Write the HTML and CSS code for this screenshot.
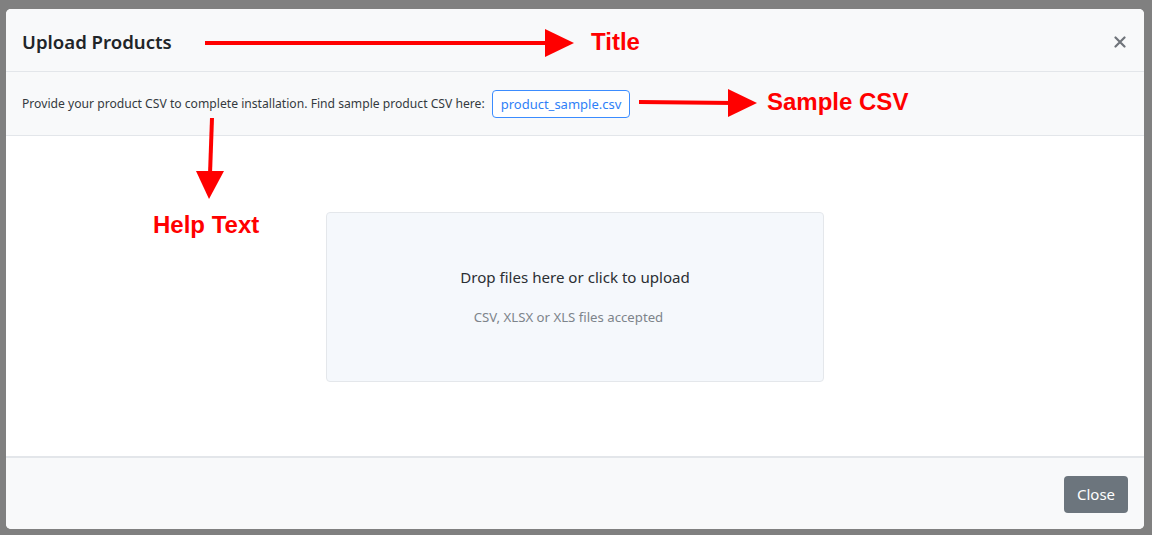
FILE: index.html
```html
<!DOCTYPE html>
<html>
<head>
<meta charset="utf-8">
<link rel="stylesheet" href="styles.css">
</head>
<body>
<div class="backdrop">
  <div class="modal">
    <div class="modal-header">
      <h2 class="modal-title">Upload Products</h2>
      <button class="btn-x" aria-label="Close">
        <svg width="12" height="12" viewBox="0 0 12 12"><path d="M1.5 1.5L10.5 10.5M10.5 1.5L1.5 10.5" stroke="#6f747a" stroke-width="2.2" stroke-linecap="round"/></svg>
      </button>
    </div>
    <div class="help-row">
      <span class="help-text">Provide your product CSV to complete installation. Find sample product CSV here:</span>
      <a class="btn-sample">product_sample.csv</a>
    </div>
    <div class="modal-body">
      <div class="dropzone">
        <div class="dz-main">Drop files here or click to upload</div>
        <div class="dz-sub">CSV, XLSX or XLS files accepted</div>
      </div>
    </div>
    <div class="modal-footer">
      <button class="btn-close">Close</button>
    </div>
  </div>

  <svg class="annot annot-title" width="380" height="32" viewBox="0 0 380 32">
    <line x1="0" y1="16" x2="345" y2="16" stroke="#ff0000" stroke-width="4"/>
    <polygon points="340,2 369,16 340,30" fill="#ff0000"/>
  </svg>
  <span class="annot-label label-title">Title</span>

  <svg class="annot annot-csv" width="122" height="32" viewBox="0 0 122 32">
    <line x1="0" y1="15" x2="95" y2="16" stroke="#ff0000" stroke-width="4"/>
    <polygon points="89,2 118,16 89,30" fill="#ff0000"/>
  </svg>
  <span class="annot-label label-csv">Sample CSV</span>

  <svg class="annot annot-help" width="32" height="84" viewBox="0 0 32 84">
    <line x1="17" y1="0" x2="15" y2="56" stroke="#ff0000" stroke-width="4"/>
    <polygon points="1,53 29,53 14,81" fill="#ff0000"/>
  </svg>
  <span class="annot-label label-help">Help Text</span>
</div>
</body>
</html>
```

FILE: styles.css
```css
* { box-sizing: border-box; }
html, body { margin: 0; padding: 0; }
body {
  width: 1152px;
  height: 535px;
  overflow: hidden;
  background: #808080;
  font-family: "Noto Sans", "Open Sans", "Liberation Sans", sans-serif;
  color: #212529;
}
.backdrop {
  position: relative;
  width: 1152px;
  height: 535px;
  padding: 9px 8px 6px 6px;
}
.modal {
  width: 1138px;
  height: 520px;
  background: #fff;
  border-radius: 5px;
  overflow: hidden;
  display: flex;
  flex-direction: column;
}
.modal-header {
  height: 63px;
  background: #f8f9fa;
  border-bottom: 1px solid #e3e6ea;
  display: flex;
  align-items: center;
  justify-content: space-between;
  padding: 3px 18px 0 16px;
}
.modal-title {
  margin: 0;
  font-size: 18.6px;
  font-weight: 600;
  color: #212529;
}
.btn-x {
  border: 0;
  background: transparent;
  padding: 0;
  width: 12px;
  height: 12px;
  display: flex;
}
.help-row {
  height: 64px;
  background: #f8f9fa;
  border-bottom: 1px solid #e3e6ea;
  display: flex;
  align-items: center;
  padding: 0 16px;
  gap: 7px;
}
.help-text {
  font-size: 12.15px;
  color: #343a40;
}
.btn-sample {
  display: inline-flex;
  align-items: center;
  height: 28px;
  padding: 0 8px;
  border: 1px solid #3b8cff;
  border-radius: 4px;
  color: #2f7ff7;
  font-size: 13px;
  background: #fff;
}
.modal-body {
  flex: 1;
  background: #fff;
  display: flex;
  justify-content: center;
  padding-top: 76px;
  border-bottom: 2px solid #e3e6ea;
}
.dropzone {
  width: 498px;
  height: 170px;
  background: #f5f8fc;
  border: 1px solid #e4e7eb;
  border-radius: 4px;
  display: flex;
  flex-direction: column;
  align-items: center;
  padding-top: 54px;
}
.dz-main {
  font-size: 15.1px;
  color: #2b2f33;
}
.dz-sub {
  margin-top: 21px;
  padding-right: 13px;
  font-size: 13.2px;
  color: #7d848b;
}
.modal-footer {
  height: 71px;
  background: #f8f9fa;
  display: flex;
  align-items: center;
  justify-content: flex-end;
  padding: 0 16px 0 0;
}
.btn-close {
  width: 64px;
  height: 37px;
  background: #6c757d;
  color: #fff;
  border: 0;
  border-radius: 4px;
  font-family: inherit;
  font-size: 15px;
  margin-top: 1px;
}
.annot { position: absolute; }
.annot-title { left: 205px; top: 27px; }
.annot-csv { left: 639px; top: 87px; }
.annot-help { left: 195px; top: 118px; }
.annot-label {
  position: absolute;
  font-family: "Liberation Sans", Arial, sans-serif;
  font-weight: 700;
  font-size: 24px;
  color: #ff0000;
  line-height: 1;
}
.label-title { left: 591px; top: 30px; }
.label-csv { left: 767px; top: 90px; }
.label-help { left: 153px; top: 213px; }
```
